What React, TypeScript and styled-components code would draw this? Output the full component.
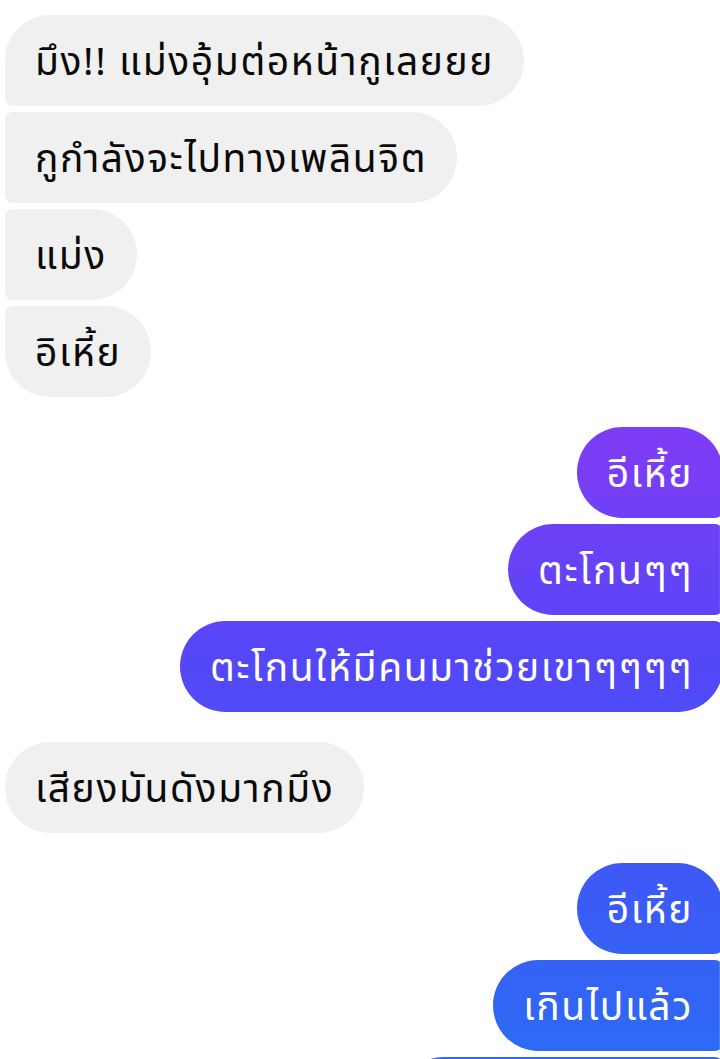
import React from "react";
import styled, { createGlobalStyle } from "styled-components";

const Global = createGlobalStyle`
  html, body {
    margin: 0;
    padding: 0;
    background: #ffffff;
    overflow: hidden;
    height: 1059px;
  }
`;

const Thread = styled.div`
  display: flex;
  flex-direction: column;
  padding: 15px 0 0 5px;
  font-family: "Noto Sans Thai", "Noto Sans", "DejaVu Sans", sans-serif;
`;

const Group = styled.div<{ $side: "in" | "out" }>`
  display: flex;
  flex-direction: column;
  align-items: ${(p) => (p.$side === "in" ? "flex-start" : "flex-end")};
  gap: 6px;
  margin-bottom: 30px;
  margin-right: ${(p) => (p.$side === "out" ? "-3px" : "0")};
`;

type Pos = "single" | "first" | "middle" | "last";

const big = "46px";
const small = "8px";

const radiusFor = (side: "in" | "out", pos: Pos) => {
  const top = pos === "single" || pos === "first" ? big : small;
  const bottom = pos === "single" || pos === "last" ? big : small;
  // tl tr br bl
  return side === "in"
    ? `${top} ${big} ${big} ${bottom}`
    : `${big} ${top} ${bottom} ${big}`;
};

const Bubble = styled.div<{ $side: "in" | "out"; $pos: Pos }>`
  box-sizing: border-box;
  height: 91px;
  display: flex;
  align-items: center;
  padding: 6px 30px 0 30px;
  font-size: 39px;
  letter-spacing: 1.6px;
  white-space: nowrap;
  border-radius: ${(p) => radiusFor(p.$side, p.$pos)};
  color: ${(p) => (p.$side === "in" ? "#0a0a0a" : "#ffffff")};
  background: ${(p) =>
    p.$side === "in"
      ? "#f0f0f0"
      : "linear-gradient(180deg, #9a34ff 0px, #7b3df5 460px, #5447f8 660px, #3b5bf6 900px, #2c6bf5 1059px) fixed"};
`;

type G = { side: "in" | "out"; msgs: string[] };

const groups: G[] = [
  {
    side: "in",
    msgs: ["มึง!! แม่งอุ้มต่อหน้ากูเลยยย", "กูกำลังจะไปทางเพลินจิต", "แม่ง", "อิเหี้ย"],
  },
  { side: "out", msgs: ["อีเหี้ย", "ตะโกนๆๆ", "ตะโกนให้มีคนมาช่วยเขาๆๆๆๆ"] },
  { side: "in", msgs: ["เสียงมันดังมากมึง"] },
  { side: "out", msgs: ["อีเหี้ย", "เกินไปแล้ว", "แบบนี้ไม่ไหวแล้ว"] },
];

const posOf = (i: number, n: number): Pos =>
  n === 1 ? "single" : i === 0 ? "first" : i === n - 1 ? "last" : "middle";

export default function App() {
  return (
    <>
      <Global />
      <Thread>
        {groups.map((g, gi) => (
          <Group key={gi} $side={g.side}>
            {g.msgs.map((m, i) => (
              <Bubble key={i} $side={g.side} $pos={posOf(i, g.msgs.length)}>
                {m}
              </Bubble>
            ))}
          </Group>
        ))}
      </Thread>
    </>
  );
}
